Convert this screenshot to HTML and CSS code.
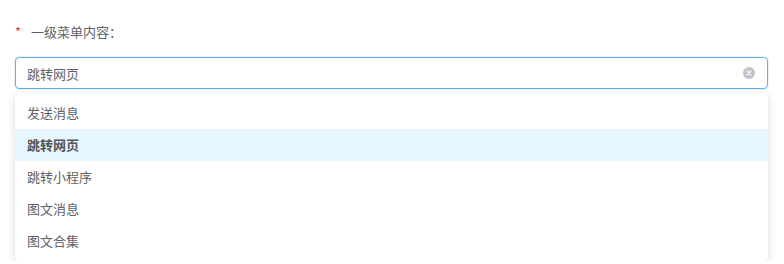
FILE: index.html
```html
<!DOCTYPE html>
<html lang="zh-CN">
<head>
    <meta charset="UTF-8">
    <title>菜单设置</title>
    <link rel="stylesheet" href="styles.css">
</head>
<body>
    <div class="form-item">
        <label class="form-label"><span class="required">*</span>一级菜单内容：</label>
        <div class="select">
            <div class="select-input">
                <span class="select-value">跳转网页</span>
                <span class="clear-icon">
                    <svg width="12" height="12" viewBox="0 0 12 12">
                        <circle cx="6" cy="6" r="6" fill="#c0c4cc"/>
                        <path d="M4 4 L8 8 M8 4 L4 8" stroke="#fff" stroke-width="1.2" stroke-linecap="round"/>
                    </svg>
                </span>
            </div>
            <ul class="dropdown">
                <li class="option">发送消息</li>
                <li class="option selected">跳转网页</li>
                <li class="option">跳转小程序</li>
                <li class="option">图文消息</li>
                <li class="option">图文合集</li>
            </ul>
        </div>
    </div>
</body>
</html>
```

FILE: styles.css
```css
body {
    margin: 0;
    padding: 22px 16px 0 15px;
    font-family: "Noto Sans CJK SC", "Liberation Sans", sans-serif;
    font-size: 13px;
    color: #606266;
    background: #fff;
}
.form-label {
    display: block;
    height: 20px;
    line-height: 20px;
    color: #606266;
    margin-bottom: 15px;
}
.required {
    color: #e4393c;
    margin-right: 10px;
}
.select-input {
    height: 30px;
    border: 1px solid #61aef3;
    border-radius: 4px;
    display: flex;
    align-items: center;
    justify-content: space-between;
    padding: 0 12px 0 11px;
    box-shadow: 0 0 0 1px rgba(97, 174, 243, 0.15);
}
.select-value {
    color: #606266;
}
.clear-icon {
    display: flex;
}
.dropdown {
    list-style: none;
    margin: 4px 0 0;
    padding: 4px 0;
    background: #fff;
    border-radius: 4px;
    box-shadow: 0 2px 8px rgba(0, 0, 0, 0.15);
}
.option {
    height: 32px;
    line-height: 32px;
    padding: 0 12px;
    color: #606266;
}
.option.selected {
    background: #e6f7ff;
    font-weight: bold;
    color: #555;
}
```
